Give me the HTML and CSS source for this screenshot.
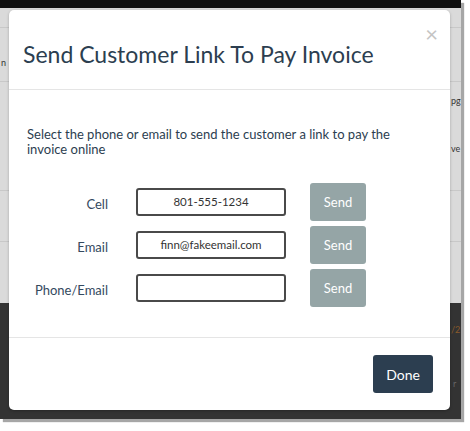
FILE: index.html
```html
<!DOCTYPE html>
<html>
<head>
<meta charset="utf-8">
<link rel="stylesheet" href="styles.css">
</head>
<body>
<div class="frame">
  <div class="topbar"></div>
  <div class="page">
    <div class="prow r1"></div>
    <div class="prow r2"><span class="frag left">n</span></div>
    <div class="prow r3"><span class="frag right">pg</span><span class="frag right low">ve</span></div>
    <div class="prow r4"></div>
    <div class="prow r5"></div>
  </div>
  <div class="dark"><span class="frag right orange">/2</span><span class="frag right lowdark">r</span></div>

  <div class="modal">
    <div class="modal-header">
      <h3 class="modal-title">Send Customer Link To Pay Invoice</h3>
      <span class="close">&times;</span>
    </div>
    <div class="modal-body">
      <p class="intro">Select the phone or email to send the customer a link to pay the invoice online</p>
      <div class="form-row">
        <label class="lbl">Cell</label>
        <div class="input">801-555-1234</div>
        <button class="btn btn-send">Send</button>
      </div>
      <div class="form-row">
        <label class="lbl">Email</label>
        <div class="input">finn@fakeemail.com</div>
        <button class="btn btn-send">Send</button>
      </div>
      <div class="form-row">
        <label class="lbl">Phone/Email</label>
        <div class="input"></div>
        <button class="btn btn-send">Send</button>
      </div>
    </div>
    <div class="modal-footer">
      <button class="btn btn-done">Done</button>
    </div>
  </div>
</div>
</body>
</html>
```

FILE: styles.css
```css
html, body {
  margin: 0;
  padding: 0;
  background: #ffffff;
}
body {
  width: 470px;
  height: 431px;
  font-family: Lato, "Open Sans", "Liberation Sans", sans-serif;
  color: #2c3e50;
  overflow: hidden;
}
.frame {
  position: relative;
  width: 461px;
  height: 419px;
  overflow: hidden;
  display: flex;
  flex-direction: column;
  box-shadow: 3px 3px 1px rgba(0, 0, 0, 0.35);
  background: #d8d8d8;
}
.topbar {
  height: 8px;
  background: #111111;
  flex: none;
}
.page {
  height: 295px;
  flex: none;
  display: flex;
  flex-direction: column;
  background: #dadada;
}
.prow {
  position: relative;
  border-bottom: 1px solid #c8c8c8;
  flex: none;
}
.r1 { height: 19px; }
.r2 { height: 53px; }
.r3 { height: 108px; }
.r4 { height: 50px; }
.r5 { flex: 1; border-bottom: none; }
.frag {
  position: absolute;
  font-size: 9px;
  line-height: 10px;
  color: #333;
}
.frag.left { left: 1px; top: 30px; }
.frag.right { left: 451px; top: 14px; }
.frag.right.low { top: 62px; }
.dark {
  flex: 1;
  background: #333333;
  position: relative;
}
.frag.orange { color: #8a5a2a; top: 22px; }
.frag.lowdark { color: #666; top: 76px; left: 453px; }

.modal {
  position: absolute;
  left: 9px;
  top: 10px;
  width: 441px;
  height: 400px;
  background: #ffffff;
  border-radius: 5px;
  display: flex;
  flex-direction: column;
  box-shadow: 0 1px 3px rgba(0,0,0,0.25);
}
.modal-header {
  height: 79px;
  border-bottom: 1px solid #e5e5e5;
  display: flex;
  justify-content: space-between;
  align-items: flex-start;
  padding: 0 12px 0 14px;
  flex: none;
}
.modal-title {
  margin: 32px 0 0 0;
  font-size: 23px;
  font-weight: 400;
  line-height: 1.1;
  color: #2c3e50;
}
.close {
  margin-top: 13px;
  font-size: 22px;
  line-height: 1;
  color: #c4c4c4;
}
.modal-body {
  flex: 1;
  padding: 37px 18px 0 18px;
}
.intro {
  margin: 0 0 26px 0;
  font-size: 13px;
  line-height: 15px;
  color: #2c3e50;
}
.form-row {
  display: flex;
  align-items: center;
  height: 38px;
  margin-bottom: 5px;
}
.lbl {
  width: 81px;
  text-align: right;
  font-size: 13px;
  color: #34495e;
  margin-right: 28px;
  padding-top: 3px;
}
.input {
  box-sizing: border-box;
  width: 150px;
  height: 28px;
  border: 2px solid #4a4a4a;
  border-radius: 3px;
  font-size: 11.5px;
  color: #333;
  text-align: center;
  line-height: 24px;
  margin-right: 24px;
}
.btn {
  font-family: Lato, "Open Sans", "Liberation Sans", sans-serif;
  border: none;
  border-radius: 3px;
  color: #ffffff;
  padding: 0;
}
.btn-send {
  width: 56px;
  height: 38px;
  background: #95a5a6;
  font-size: 13px;
}
.modal-footer {
  height: 73px;
  box-sizing: border-box;
  border-top: 1px solid #e5e5e5;
  flex: none;
  display: flex;
  justify-content: flex-end;
  align-items: flex-start;
  padding: 17px 17px 0 0;
}
.btn-done {
  width: 60px;
  height: 38px;
  background: #2c3e50;
  font-size: 14px;
}
```
